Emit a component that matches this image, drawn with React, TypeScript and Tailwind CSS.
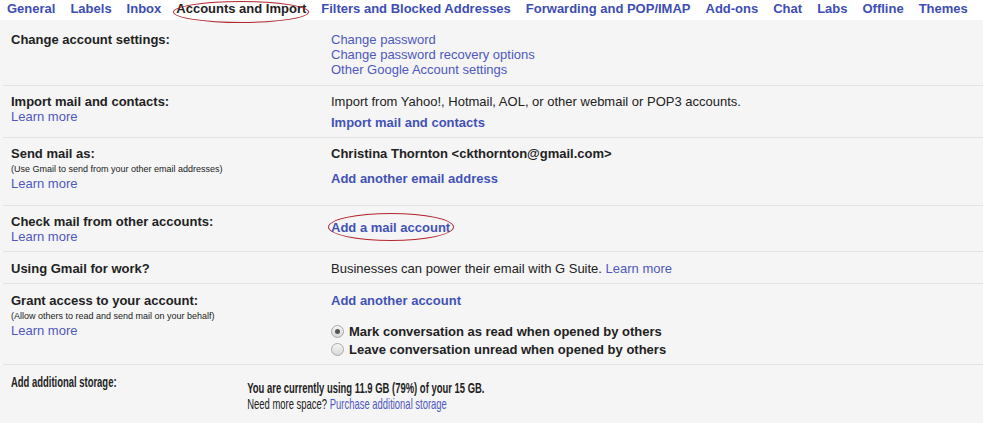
import React from 'react';

const tabs = [
  'General',
  'Labels',
  'Inbox',
  'Accounts and Import',
  'Filters and Blocked Addresses',
  'Forwarding and POP/IMAP',
  'Add-ons',
  'Chat',
  'Labs',
  'Offline',
  'Themes',
];

const Radio: React.FC<{ checked?: boolean }> = ({ checked }) => (
  <span className="inline-flex items-center justify-center w-[13px] h-[13px] rounded-full border border-[#a9a9a9] bg-gradient-to-b from-[#f4f4f4] to-[#d8d8d8] mr-[5px] shrink-0">
    {checked && <span className="w-[5px] h-[5px] rounded-full bg-[#555]" />}
  </span>
);

const LearnMore = () => <a className="text-[#4f58c0] block">Learn more</a>;

export default function App() {
  return (
    <div className="w-[983px] h-[423px] overflow-hidden bg-[#f5f5f5] text-[13px] leading-[15px] text-[#222] font-['Liberation_Sans',Arial,sans-serif]">
      {/* Tab bar */}
      <div className="h-[20px] bg-white flex items-start gap-[15px] pl-[7px]">
        {tabs.map((t) => (
          <span
            key={t}
            className={
              'relative whitespace-nowrap font-bold leading-[18px] ' +
              (t === 'Accounts and Import' ? 'text-[#222]' : 'text-[#3d4db3]')
            }
          >
            {t}
            {t === 'Accounts and Import' && (
              <span className="absolute -left-[3px] -right-[3px] top-[1px] h-[22px] rounded-[50%] border border-[#b3262e]" />
            )}
          </span>
        ))}
      </div>

      <div className="pl-[3px]">
        {/* Change account settings */}
        <div className="grid grid-cols-[320px_1fr] pl-[8px] pt-[12px] h-[66px] border-b border-[#e3e3e3]">
          <div className="font-bold">Change account settings:</div>
          <div className="text-[#4f58c0]">
            <a className="block">Change password</a>
            <a className="block">Change password recovery options</a>
            <a className="block">Other Google Account settings</a>
          </div>
        </div>

        {/* Import */}
        <div className="grid grid-cols-[320px_1fr] pl-[8px] pt-[8px] h-[52px] border-b border-[#e3e3e3]">
          <div>
            <div className="font-bold">Import mail and contacts:</div>
            <LearnMore />
          </div>
          <div>
            <div>Import from Yahoo!, Hotmail, AOL, or other webmail or POP3 accounts.</div>
            <a className="block mt-[6px] font-bold text-[#4352b8]">Import mail and contacts</a>
          </div>
        </div>

        {/* Send mail as */}
        <div className="grid grid-cols-[320px_1fr] pl-[8px] pt-[8px] h-[68px] border-b border-[#e3e3e3]">
          <div>
            <div className="font-bold">Send mail as:</div>
            <div className="text-[9px] leading-[13px] mt-[2px]">(Use Gmail to send from your other email addresses)</div>
            <LearnMore />
          </div>
          <div>
            <div className="font-bold">Christina Thornton &lt;ckthornton@gmail.com&gt;</div>
            <a className="block mt-[10px] font-bold text-[#4352b8]">Add another email address</a>
          </div>
        </div>

        {/* Check mail */}
        <div className="grid grid-cols-[320px_1fr] pl-[8px] pt-[8px] h-[46px] border-b border-[#e3e3e3]">
          <div>
            <div className="font-bold">Check mail from other accounts:</div>
            <LearnMore />
          </div>
          <div className="pt-[6px]">
            <a className="relative inline-block font-bold text-[#4352b8]">
              Add a mail account
              <span className="absolute -left-[3px] -right-[4px] -top-[7px] -bottom-[6px] rounded-[50%] border border-[#b3262e]" />
            </a>
          </div>
        </div>

        {/* Gmail for work */}
        <div className="grid grid-cols-[320px_1fr] pl-[8px] pt-[9px] h-[32px] border-b border-[#e3e3e3]">
          <div className="font-bold">Using Gmail for work?</div>
          <div>
            Businesses can power their email with G Suite. <a className="text-[#4f58c0]">Learn more</a>
          </div>
        </div>

        {/* Grant access */}
        <div className="grid grid-cols-[320px_1fr] pl-[8px] pt-[9px] h-[81px] border-b border-[#e3e3e3]">
          <div>
            <div className="font-bold">Grant access to your account:</div>
            <div className="text-[9px] leading-[13px] mt-[2px]">(Allow others to read and send mail on your behalf)</div>
            <LearnMore />
          </div>
          <div>
            <a className="block font-bold text-[#4352b8]">Add another account</a>
            <div className="mt-[16px] flex items-center font-bold h-[15px]">
              <Radio checked />
              Mark conversation as read when opened by others
            </div>
            <div className="mt-[3px] flex items-center font-bold h-[15px]">
              <Radio />
              Leave conversation unread when opened by others
            </div>
          </div>
        </div>

        {/* Storage (squeezed horizontally in the screenshot) */}
        <div className="pt-[9px] pl-[8px]">
          <div className="grid grid-cols-[375px_1fr] text-[15px] leading-[16px] scale-x-[0.63] origin-left w-[1300px]">
            <div className="font-bold">Add additional storage:</div>
            <div className="pt-[6px]">
              <div className="font-bold">You are currently using 11.9 GB (79%) of your 15 GB.</div>
              <div>
                Need more space? <a className="text-[#4f58c0]">Purchase additional storage</a>
              </div>
            </div>
          </div>
        </div>
      </div>
    </div>
  );
}
